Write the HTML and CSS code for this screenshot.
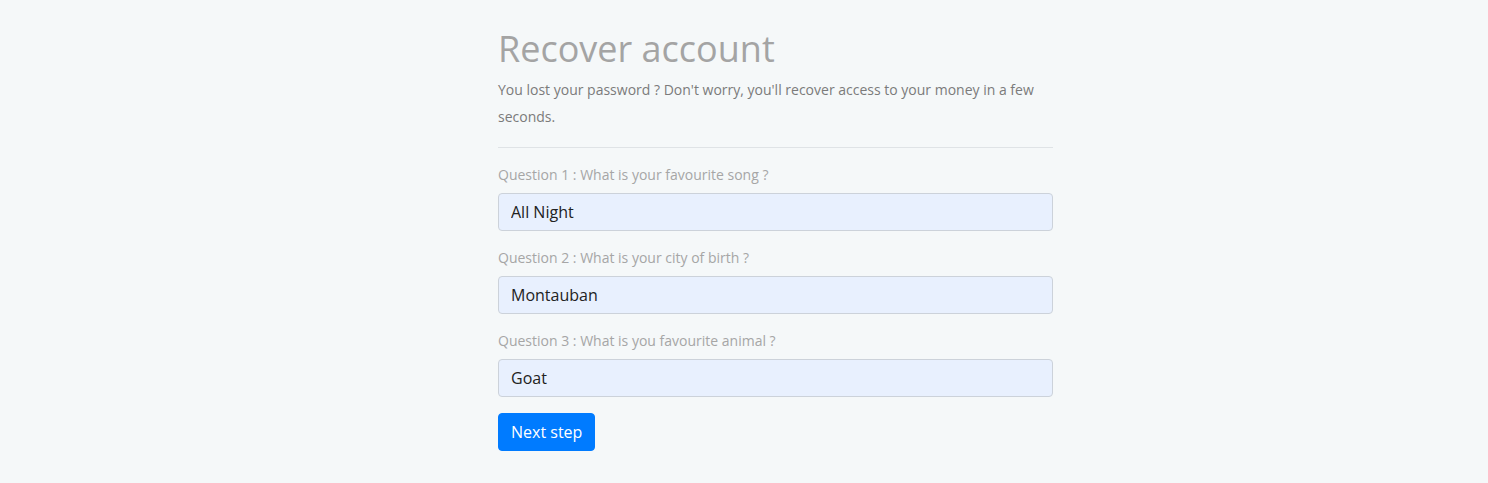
FILE: index.html
```html
<!DOCTYPE html>
<html lang="en">
<head>
<meta charset="utf-8">
<title>Recover account</title>
<link rel="stylesheet" href="styles.css">
</head>
<body>
<main class="page">
  <section class="recover">
    <h1 class="title">Recover account</h1>
    <p class="lead">You lost your password ? Don't worry, you'll recover access to your money in a few seconds.</p>
    <hr class="divider">
    <form class="form">
      <div class="form-group">
        <label class="label" for="q1">Question 1 : What is your favourite song ?</label>
        <input class="input" id="q1" type="text" value="All Night">
      </div>
      <div class="form-group">
        <label class="label" for="q2">Question 2 : What is your city of birth ?</label>
        <input class="input" id="q2" type="text" value="Montauban">
      </div>
      <div class="form-group">
        <label class="label" for="q3">Question 3 : What is you favourite animal ?</label>
        <input class="input" id="q3" type="text" value="Goat">
      </div>
      <button class="btn" type="button">Next step</button>
    </form>
  </section>
</main>
</body>
</html>
```

FILE: styles.css
```css
html, body {
  margin: 0;
  padding: 0;
}

body {
  background: #f5f8f9;
  font-family: "Open Sans", "Noto Sans", sans-serif;
  color: #212529;
}

.page {
  padding: 27px 0 0 498px;
}

.recover {
  width: 555px;
}

.title {
  margin: 0 0 6px;
  font-size: 36px;
  font-weight: 400;
  line-height: 43px;
  color: #a4a4a4;
}

.lead {
  margin: 0;
  font-size: 14px;
  line-height: 27px;
  color: #7b7b7b;
}

.divider {
  margin: 17px 0 16px;
  border: 0;
  border-top: 1px solid #dfe3e6;
}

.form {
  margin: 0;
}

.form-group {
  margin-bottom: 16px;
}

.label {
  display: block;
  margin-bottom: 8px;
  font-size: 14px;
  line-height: 21px;
  color: #a6a6a6;
}

.input {
  display: block;
  box-sizing: border-box;
  width: 100%;
  height: 38px;
  margin: 0;
  padding: 6px 12px;
  font-family: inherit;
  font-size: 16px;
  line-height: 24px;
  color: #222;
  background: #e8f0fe;
  border: 1px solid #ccd2da;
  border-radius: 4px;
  outline: none;
}

.btn {
  display: inline-block;
  height: 38px;
  padding: 6px 12px;
  font-family: inherit;
  font-size: 16px;
  line-height: 24px;
  color: #fff;
  background: #007bff;
  border: 1px solid #007bff;
  border-radius: 4px;
  cursor: pointer;
}
```
